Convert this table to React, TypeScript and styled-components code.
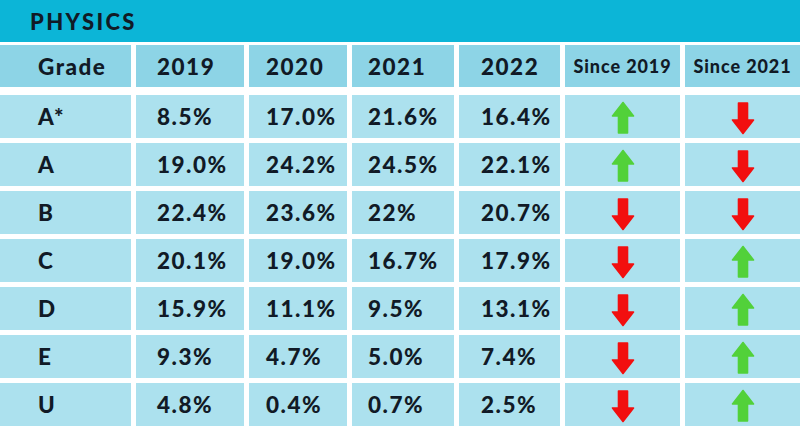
import React from 'react'
import styled, { createGlobalStyle } from 'styled-components'

type Trend = 'up' | 'down'

interface GradeRow {
  grade: string
  values: string[]
  since2019: Trend
  since2021: Trend
}

const rows: GradeRow[] = [
  { grade: 'A*', values: ['8.5%', '17.0%', '21.6%', '16.4%'], since2019: 'up', since2021: 'down' },
  { grade: 'A', values: ['19.0%', '24.2%', '24.5%', '22.1%'], since2019: 'up', since2021: 'down' },
  { grade: 'B', values: ['22.4%', '23.6%', '22%', '20.7%'], since2019: 'down', since2021: 'down' },
  { grade: 'C', values: ['20.1%', '19.0%', '16.7%', '17.9%'], since2019: 'down', since2021: 'up' },
  { grade: 'D', values: ['15.9%', '11.1%', '9.5%', '13.1%'], since2019: 'down', since2021: 'up' },
  { grade: 'E', values: ['9.3%', '4.7%', '5.0%', '7.4%'], since2019: 'down', since2021: 'up' },
  { grade: 'U', values: ['4.8%', '0.4%', '0.7%', '2.5%'], since2019: 'down', since2021: 'up' }
]

const years = ['2019', '2020', '2021', '2022']
const yearPadding = [21, 17, 16, 22]

const GlobalStyle = createGlobalStyle`
  html, body {
    margin: 0;
    padding: 0;
    background: #ffffff;
  }
  body {
    font-family: Lato, "Open Sans", sans-serif;
    color: #111a26;
  }
`

const Page = styled.div`
  width: 800px;
  height: 432px;
  overflow: hidden;
  background: #ffffff;
`

const TitleBar = styled.div`
  height: 42px;
  background: #0cb5d7;
  display: flex;
  align-items: center;
  padding-left: 30px;
  font-size: 22px;
  font-weight: 900;
  letter-spacing: 2.4px;
`

const Row = styled.div`
  display: grid;
  grid-template-columns: 131px 108px 98px 102px 101px 115px 115px;
  column-gap: 5px;
`

const HeaderRow = styled(Row)`
  margin-top: 3px;
  height: 42px;
`

const Body = styled.div`
  margin-top: 8px;
  display: flex;
  flex-direction: column;
  gap: 5px;
`

const BodyRow = styled(Row)`
  height: 43px;
`

const Cell = styled.div<{ $head?: boolean; $pad?: number; $center?: boolean }>`
  background: ${p => (p.$head ? '#8dd4e6' : '#ace1ee')};
  display: flex;
  align-items: center;
  justify-content: ${p => (p.$center ? 'center' : 'flex-start')};
  padding-left: ${p => (p.$center ? 0 : p.$pad ?? 0)}px;
  font-size: 22.5px;
  font-weight: 900;
  letter-spacing: 1.5px;
  white-space: nowrap;
`

const SmallHead = styled(Cell)`
  font-size: 18px;
  letter-spacing: 0.9px;
`

const ArrowSvg = styled.svg`
  width: 24px;
  height: 34px;
  display: block;
  margin-top: 3px;
`

const Arrow: React.FC<{ dir: Trend }> = ({ dir }) => {
  const color = dir === 'up' ? '#52d13a' : '#f20f0f'
  return (
    <ArrowSvg viewBox="0 0 24 34">
      <path
        d="M12 1.5 L22.5 15 L16.5 15 L16.5 32 L7.5 32 L7.5 15 L1.5 15 Z"
        fill={color}
        stroke={color}
        strokeWidth="1.6"
        strokeLinejoin="round"
        transform={dir === 'down' ? 'rotate(180 12 17)' : undefined}
      />
    </ArrowSvg>
  )
}

const App: React.FC = () => {
  return (
    <Page>
      <GlobalStyle />
      <TitleBar>PHYSICS</TitleBar>
      <HeaderRow>
        <Cell $head $pad={38}>Grade</Cell>
        {years.map((y, i) => (
          <Cell $head key={y} $pad={yearPadding[i]}>{y}</Cell>
        ))}
        <SmallHead $head $center>Since 2019</SmallHead>
        <SmallHead $head $center>Since 2021</SmallHead>
      </HeaderRow>
      <Body>
        {rows.map(r => (
          <BodyRow key={r.grade}>
            <Cell $pad={38}>{r.grade}</Cell>
            {r.values.map((v, i) => (
              <Cell key={i} $pad={yearPadding[i]}>{v}</Cell>
            ))}
            <Cell $center><Arrow dir={r.since2019} /></Cell>
            <Cell $center><Arrow dir={r.since2021} /></Cell>
          </BodyRow>
        ))}
      </Body>
    </Page>
  )
}

export default App
